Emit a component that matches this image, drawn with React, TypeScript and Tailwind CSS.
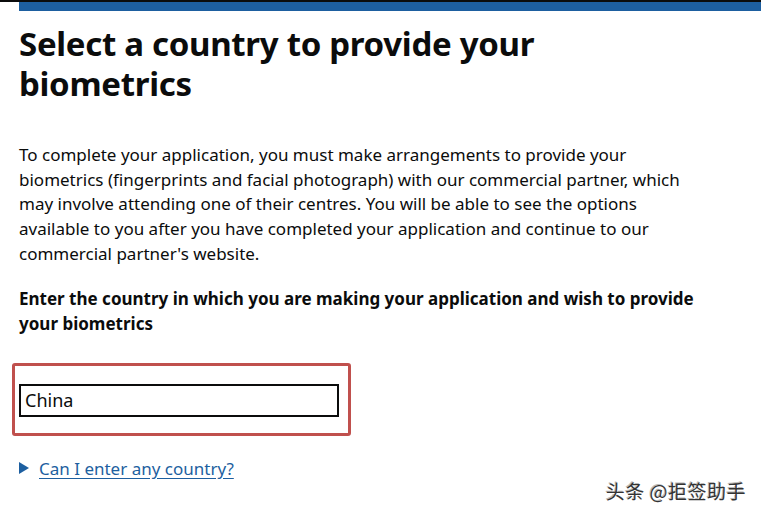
import React from 'react';

export default function App() {
  return (
    <div className="relative w-[761px] h-[517px] overflow-hidden bg-white text-[#0b0c0c]" style={{ fontFamily: '"Noto Sans", Arial, sans-serif' }}>
      <div className="h-[2px] bg-[#0b0c0c]" />
      <div className="ml-[19px] h-[9px] bg-[#1d5fa0]" />
      <main className="px-[19px]">
        <h1 className="mt-[13px] text-[33px] leading-[40px] font-bold tracking-[-0.3px]">
          Select a country to provide your
          <br />
          biometrics
        </h1>
        <p className="mt-[39px] text-[17px] leading-[24.7px] w-[680px]">
          To complete your application, you must make arrangements to provide your biometrics (fingerprints and facial photograph) with our commercial partner, which may involve attending one of their centres. You will be able to see the options available to you after you have completed your application and continue to our commercial partner's website.
        </p>
        <label className="block mt-[19px] text-[17px] leading-[25px] font-bold w-[700px]">
          Enter the country in which you are making your application and wish to provide your biometrics
        </label>
        <div className="-ml-[7px] mt-[27px] w-[339px] h-[73px] border-[3px] border-[#c0504d] rounded-[3px] pl-[4px] pt-[18px]">
          <div className="w-[320px] h-[33px] border-2 border-[#0b0c0c] px-[4px] text-[18px] leading-[28px]">China</div>
        </div>
        <div className="mt-[20px] flex items-center gap-[10px] text-[17px]">
          <svg width="10" height="12" viewBox="0 0 10 12"><path d="M0 0 L10 6 L0 12 Z" fill="#1d5fa0" /></svg>
          <a className="text-[#1d5fa0] underline underline-offset-[3px]">Can I enter any country?</a>
        </div>
      </main>
      <div className="absolute right-[15px] bottom-[12px] text-[19px] text-[#333] tracking-[0.5px]" style={{ fontFamily: '"Noto Sans CJK SC", sans-serif', textShadow: '1px 1px 0 #fff, -1px -1px 0 #bbb' }}>
        头条 @拒签助手
      </div>
    </div>
  );
}
